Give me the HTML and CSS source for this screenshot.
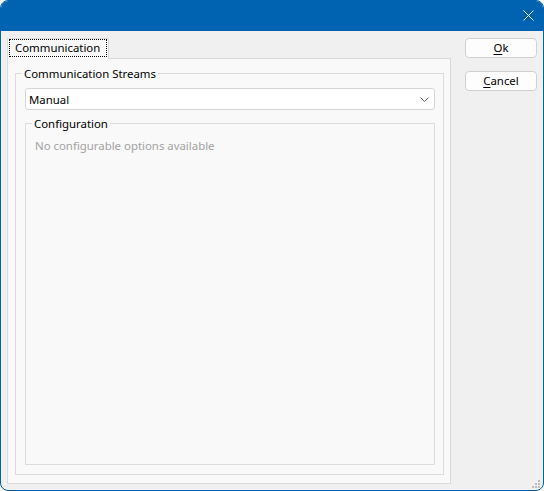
FILE: index.html
```html
<!DOCTYPE html>
<html lang="en">
<head>
<meta charset="utf-8">
<title>Communication</title>
<link rel="stylesheet" href="styles.css">
</head>
<body>
<div class="window">
  <div class="titlebar">
    <svg class="close" width="11" height="11" viewBox="0 0 11 11" aria-label="Close">
      <path d="M0.5 0.5 L10.5 10.5 M10.5 0.5 L0.5 10.5" stroke="#ffffff" stroke-width="1" fill="none"/>
    </svg>
  </div>
  <div class="client">
    <div class="tabs">
      <div class="tabstrip">
        <div class="tab"><span class="focus">Communication</span></div>
      </div>
      <div class="panel">
        <fieldset class="group streams">
          <legend>Communication Streams</legend>
          <div class="combo">
            <span class="combo-text">Manual</span>
            <svg class="chevron" width="9" height="5" viewBox="0 0 9 5">
              <path d="M0.5 0.5 L4.5 4.5 L8.5 0.5" stroke="#5f5f5f" stroke-width="1" fill="none"/>
            </svg>
          </div>
          <fieldset class="group config">
            <legend>Configuration</legend>
            <p class="empty">No configurable options available</p>
          </fieldset>
        </fieldset>
      </div>
    </div>
    <div class="buttons">
      <button class="btn"><u>O</u>k</button>
      <button class="btn"><u>C</u>ancel</button>
    </div>
  </div>
  <svg class="grip" width="8" height="8" viewBox="0 0 8 8">
    <rect x="6" y="0" width="2" height="2" fill="#bdbdbd"/>
    <rect x="3" y="3" width="2" height="2" fill="#bdbdbd"/>
    <rect x="6" y="3" width="2" height="2" fill="#bdbdbd"/>
    <rect x="0" y="6" width="2" height="2" fill="#bdbdbd"/>
    <rect x="3" y="6" width="2" height="2" fill="#bdbdbd"/>
    <rect x="6" y="6" width="2" height="2" fill="#bdbdbd"/>
  </svg>
</div>
</body>
</html>
```
FILE: styles.css
```css
html, body {
  margin: 0;
  padding: 0;
  background: #ffffff;
}

body {
  font-family: "Noto Sans", "Open Sans", sans-serif;
  font-size: 11.4px;
  line-height: 15px;
  color: #000000;
}

.window {
  position: relative;
  box-sizing: border-box;
  width: 544px;
  height: 491px;
  border: 1px solid #0063b1;
  border-radius: 8px;
  background: #f0f0f0;
  overflow: hidden;
  display: flex;
  flex-direction: column;
}

.titlebar {
  height: 30px;
  flex: none;
  background: #0063b1;
  display: flex;
  justify-content: flex-end;
  align-items: flex-start;
  padding: 9px 9px 0 0;
  box-sizing: border-box;
}

.close {
  display: block;
}

.client {
  flex: 1;
  display: flex;
  gap: 14px;
  padding: 7px 6px 6px 6px;
  min-height: 0;
}

.tabs {
  width: 444px;
  display: flex;
  flex-direction: column;
}

.tabstrip {
  display: flex;
}

.tab {
  position: relative;
  z-index: 1;
  background: #f9f9f9;
  border: 1px solid #dadada;
  border-bottom: none;
  padding: 0 1px 2px 1px;
  margin-bottom: -1px;
}

.focus {
  display: block;
  border: 1px dotted #000000;
  padding: 0 6px 0 5px;
  line-height: 16px;
}

.panel {
  flex: 1;
  background: #f9f9f9;
  border: 1px solid #dadada;
  padding: 0 6px 8px 7px;
  display: flex;
  flex-direction: column;
  min-height: 0;
}

.group {
  margin: 0;
  border: 1px solid #dcdcdc;
  min-width: 0;
  display: flex;
  flex-direction: column;
}

.group legend {
  padding: 0 2px;
  margin-left: -3px;
  line-height: 15px;
}

.streams {
  flex: 1;
  margin-top: 7px;
  padding: 7px 8px 9px 9px;
}

.combo {
  box-sizing: border-box;
  height: 22px;
  flex: none;
  background: #ffffff;
  border: 1px solid #d5d5d5;
  border-radius: 3px;
  display: flex;
  align-items: center;
  justify-content: space-between;
  padding: 0 5px 0 3px;
}

.chevron {
  display: block;
}

.config {
  flex: 1;
  margin-top: 6px;
  padding: 7px 9px 9px 9px;
}

.empty {
  margin: 0;
  color: #a2a2a2;
}

.buttons {
  width: 72px;
  display: flex;
  flex-direction: column;
  gap: 13px;
}

.btn {
  box-sizing: border-box;
  height: 20px;
  width: 72px;
  margin: 0;
  padding: 0;
  background: #fdfdfd;
  border: 1px solid #d0d0d0;
  border-radius: 4px;
  font-family: inherit;
  font-size: 11.4px;
  line-height: 16px;
  color: #000000;
}

.btn u {
  text-decoration-thickness: 1px;
  text-underline-offset: 2px;
}

.grip {
  position: absolute;
  right: 3px;
  bottom: 2px;
}
```
